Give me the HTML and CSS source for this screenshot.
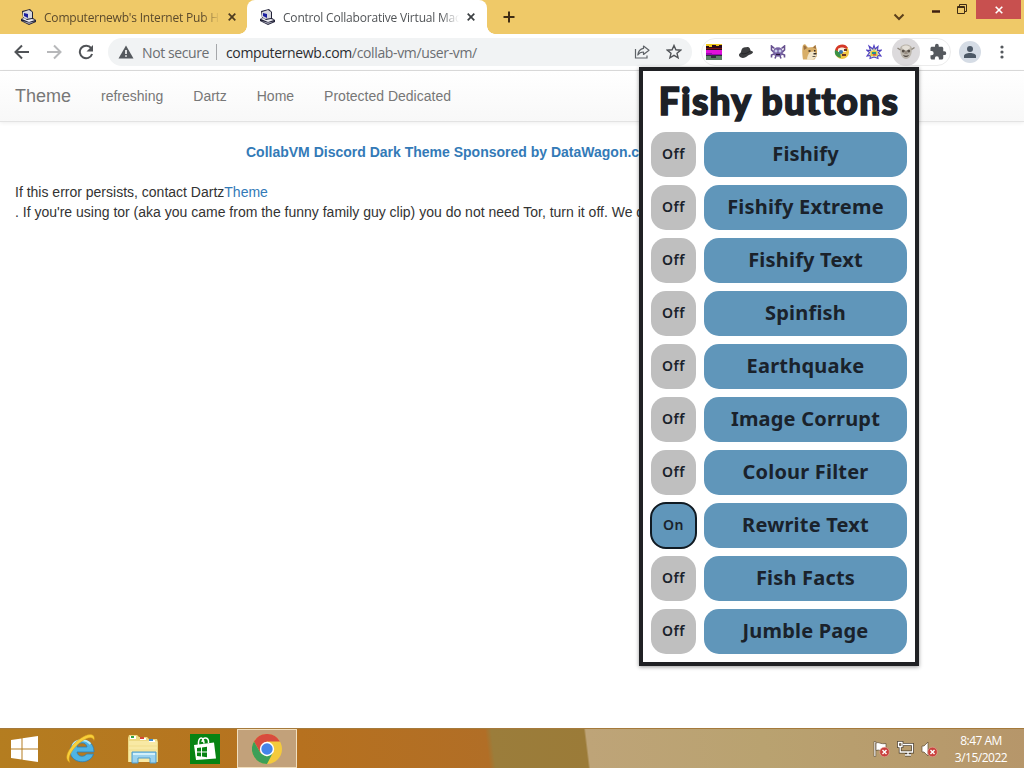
FILE: index.html
```
<!DOCTYPE html>
<html lang="en">
<head>
    <meta charset="UTF-8">
    <meta name="viewport" content="width=device-width, initial-scale=1.0">
    <title>Control Collaborative Virtual Machines</title>
    <link rel="stylesheet" href="styles.css">
</head>
<body>

    <!-- Shared icon -->
    <svg class="defs" width="0" height="0">
        <symbol id="pc" viewBox="0 0 16 16">
            <path d="M2 2l8-2 3 3v6l3 2v2l-7 3-8-4v-2l2-1z" fill="#222238"/>
            <path d="M3 3l6-2 3 2v6l-6 1-3-2z" fill="#d6d6dc"/>
            <path d="M4 4l4 1v4L4 7z" fill="#1b1fa0"/>
            <path d="M2 10l7 3 6-2-3-1-5 1-3-2z" fill="#efeff4"/>
            <path d="M2 12l7 3 6-2.5-6 1z" fill="#a7a7b8"/>
        </symbol>
    </svg>

    <div class="browser">
        <!-- Tabs -->
        <div class="tabs">
            <div class="tab">
                <svg class="favicon"><use href="#pc"/></svg>
                <span class="tab-title">Computernewb's Internet Pub H</span>
                <svg class="tab-close" viewBox="0 0 8 8"><path d="M.7.7l6.6 6.6M7.3.7L.7 7.3" stroke="#4d3b20" stroke-width="1.7"/></svg>
            </div>
            <div class="tab active">
                <svg class="favicon"><use href="#pc"/></svg>
                <span class="tab-title">Control Collaborative Virtual Mac</span>
                <svg class="tab-close" viewBox="0 0 8 8"><path d="M.7.7l6.6 6.6M7.3.7L.7 7.3" stroke="#3c4043" stroke-width="1.7"/></svg>
            </div>
            <svg class="new-tab" viewBox="0 0 12 12"><path d="M6 .5v11M.5 6h11" stroke="#3f2c14" stroke-width="2"/></svg>
            <div class="window-buttons">
                <svg class="chevron" width="12" height="8" viewBox="0 0 12 8"><path d="M1.5 1.5L6 6l4.500-4.500" fill="none" stroke="#5c401b" stroke-width="2"/></svg>
                <svg class="minimize" width="8" height="3" viewBox="0 0 8 3"><path d="M0 1.500h8" stroke="#3f1f10" stroke-width="2.500"/></svg>
                <svg class="restore" width="10" height="10" viewBox="0 0 10 10"><path d="M.5 2.500h7v7h-7zM.5 3.500h7M2.500 2V.5h7v7H8" fill="none" stroke="#3f2c14"/></svg>
                <div class="window-close">
                    <svg width="8" height="8" viewBox="0 0 8 8"><path d="M.7.7l6.600 6.600M7.300.7L.7 7.300" stroke="#fff" stroke-width="1.600"/></svg>
                </div>
            </div>
        </div>

        <!-- Toolbar -->
        <div class="toolbar">
            <div class="tool"><svg width="16" height="16" viewBox="0 0 16 16"><path d="M15 8H2M8 1.500L1.500 8 8 14.500" fill="none" stroke="#505357" stroke-width="2"/></svg></div>
            <div class="tool"><svg width="16" height="16" viewBox="0 0 16 16"><path d="M1 8h13M8 1.500L14.500 8 8 14.500" fill="none" stroke="#b7b8ba" stroke-width="2"/></svg></div>
            <div class="tool"><svg width="16" height="16" viewBox="0 0 16 16"><path d="M13.200 4.200A6.300 6.300 0 1 0 14.100 10" fill="none" stroke="#505357" stroke-width="2"/><path d="M15 1v6.500H8.500z" fill="#505357"/></svg></div>

            <div class="omnibox">
                <svg class="warning" width="16" height="14" viewBox="0 0 16 14"><path d="M8 .5l7.500 13H.5z" fill="#55595e"/><path d="M8 5v4M8 10.200v1.600" stroke="#fff" stroke-width="1.600"/></svg>
                <span class="not-secure">Not secure</span>
                <span class="divider"></span>
                <span class="url"><b>computernewb.com</b>/collab-vm/user-vm/</span>
                <div class="tool"><svg width="16" height="14" viewBox="0 0 16 14"><path d="M1.500 4v9h11.500v-2.500" fill="none" stroke="#5f6368" stroke-width="1.200"/><path d="M9.500 1L15 5.200 9.500 9.400V7C7 7 5 8 3.800 10 4.200 6.500 6 4 9.500 3.400z" fill="none" stroke="#5f6368" stroke-width="1.200" stroke-linejoin="round"/></svg></div>
                <div class="tool"><svg width="16" height="16" viewBox="0 0 16 16"><path d="M8 1.500l1.900 4.300 4.700.4-3.600 3.100 1.100 4.600L8 11.400l-4.100 2.500L5 9.300 1.400 6.200l4.700-.4z" fill="none" stroke="#505357" stroke-width="1.400"/></svg></div>
            </div>

            <div class="extensions">
                <div class="tool"><svg width="16" height="16" viewBox="0 0 16 16"><path fill="#2b0a1c" d="M0 0h16v6H0z"/><path fill="#f0c81c" d="M0 0h16v1h-3v1h-3V1H6v2H3V2H0z"/><path fill="#7a1414" d="M0 4h16v1H0z"/><path fill="#e011d8" d="M0 6h16v5H0z"/><path fill="#9a0ab0" d="M0 9h6v1h10v1H0z"/><path fill="#5b8062" d="M0 12h16v4H0z"/><path fill="#30303c" d="M0 11h16v1H0zM5 12h5v2H5z"/></svg></div>
                <div class="tool"><svg width="16" height="14" viewBox="0 0 16 14"><path d="M1 9.500C1.500 8.500 2.500 8 3 7c.5-2.500 1-4 3-4.500 1.500-.5 2 0 3-.5 2-.5 3 1 3.500 3.500C14 6 15 6.500 15 7.500c-1 1.500-3 2-5 3-2 2-5 3-7 2-1.300-.6-2.200-1.800-2-3z" fill="#3c3d3f"/><path d="M3.500 8.500c3 1 6.500-.5 8.500-2.500" stroke="#252628" fill="none"/></svg></div>
                <div class="tool"><svg width="16" height="14" viewBox="0 0 16 14"><path d="M4.500 3.500L1.500 1v4l2 2M11.500 3.500l3-2.500v4l-2 2M4 9l-2.500 1v2.500M12 9l2.500 1v2.500M6 11l-1 2.500M10 11l1 2.500" fill="none" stroke="#66508e" stroke-width="1.600"/><ellipse cx="8" cy="7" rx="5" ry="4.700" fill="#7560a2"/><circle cx="6" cy="6" r="1.500" fill="#c9cdea"/><circle cx="10" cy="6" r="1.500" fill="#c9cdea"/><path d="M6 9.500h4" stroke="#291a3b" stroke-width="1.200"/></svg></div>
                <div class="tool"><svg width="16" height="16" viewBox="0 0 16 16"><path d="M1 1l2-1 3 3.500 5-.5L13.500 1l1.500 5v6l-2.500 3.500H1C0 10 0 4 1 1z" fill="#d8ae68"/><path d="M1.500 2l1.500-.5L5 4 2 6zM11 3.500L13.500 1l.5 4z" fill="#9c7040"/><path d="M8 8l4-.5 3 2.500-1.500 4-5 2H5c0-3 1-6 3-8z" fill="#f1e4c8"/><path d="M6.500 6.200h2v1.500h-2zM12 6h1.500v1.500H12zM11.500 9h3v1.600h-3zM10.500 12h3v.8h-3z" fill="#352c24"/></svg></div>
                <div class="tool"><svg width="16" height="16" viewBox="0 0 16 16"><circle cx="8" cy="8" r="7" fill="#efc444"/><path d="M1 7a7 7 0 0 1 13-3l-5 2z" fill="#d53828"/><path d="M1 6l5 2 1 6C2 13 0 10 1 6z" fill="#3b9245"/><path d="M4 5c2-2 6-2 8 0v3H4z" fill="#f4f0e0"/><circle cx="7" cy="8" r="2" fill="#3674af"/><path d="M10 5h3v2h-3zM8 10h4v2H8z" fill="#6b3424"/></svg></div>
                <div class="tool"><svg width="16" height="16" viewBox="0 0 16 16"><path d="M8 1.500l1.200 3.500L12 2.500l-.5 4 4-.5-3 2.500L15 12l-3.500-.5.5 3-4-1.500-4 1.500.5-3L1 12l2.500-3.500L.5 6l4 .5L3 2l3.800 3z" fill="#d6e2b4" stroke="#4f3fc2" stroke-width="1.100"/><path d="M8 5l1 2 2.500.5L11 10l1 2H4l1-2-.5-2.500L7 7z" fill="#e6c93c"/><path d="M6 8h4v2H6z" fill="#238f91"/><path d="M7 10h3v1.500H7z" fill="#d94a4e"/></svg></div>
                <div class="tool selected"><svg width="18" height="18" viewBox="0 0 18 18"><path d="M3 6C3 3 6 1.500 9 1.500S15 3 15 6l-.5 4c-.5 3-3 6-5.500 6S4 13 3.500 10z" fill="#bab4aa"/><path d="M5 4c2-2 6-2 8 0l-1 3H6z" fill="#e4dfd6"/><circle cx="6.300" cy="8" r="1.500" fill="#544c44"/><circle cx="11.700" cy="8" r="1.500" fill="#544c44"/><path d="M8 8h2l.8 3H7.200z" fill="#968b80"/><path d="M6 12c2 1 4 1 6 0-1 2.500-5 2.500-6 0z" fill="#463d38"/><path d="M.5 5l3 2M14.500 6.500l3-2" stroke="#8c857b" stroke-width="1.500"/></svg></div>
                <div class="tool"><svg width="18" height="18" viewBox="0 0 24 24"><path fill="#55595e" d="M20.500 11H19V7c0-1.100-.9-2-2-2h-4V3.500a2.500 2.500 0 0 0-5 0V5H4c-1.100 0-2 .9-2 2v3.800h1.500a2.700 2.700 0 0 1 0 5.400H2V20c0 1.100.9 2 2 2h3.800v-1.500a2.700 2.700 0 0 1 5.400 0V22H17c1.100 0 2-.9 2-2v-4h1.500a2.500 2.500 0 0 0 0-5z"/></svg></div>
            </div>

            <div class="tool profile"><svg width="12" height="12" viewBox="0 0 12 12"><circle cx="6" cy="3" r="3" fill="#4d5967"/><path d="M0 12v-2c0-2 3-3 6-3s6 1 6 3v2z" fill="#4d5967"/></svg></div>
            <div class="tool"><svg width="4" height="14" viewBox="0 0 4 14"><g fill="#55595e"><circle cx="2" cy="2" r="1.600"/><circle cx="2" cy="7" r="1.600"/><circle cx="2" cy="12" r="1.600"/></g></svg></div>
        </div>

        <!-- Page -->
        <div class="page">
            <div class="navbar">
                <a class="brand">Theme</a>
                <a>refreshing</a>
                <a>Dartz</a>
                <a>Home</a>
                <a>Protected Dedicated</a>
            </div>
            <div class="sponsor">CollabVM Discord Dark Theme Sponsored by DataWagon.com</div>
            <div class="message">If this error persists, contact Dartz<a>Theme</a><br>. If you're using tor (aka you came from the funny family guy clip) you do not need Tor, turn it off. We do</div>
        </div>
    </div>

    <!-- Extension popup -->
    <div class="popup">
        <h1><span>Fishy buttons</span></h1>
        <div class="row"><button class="switch">Off</button><button class="name">Fishify</button></div>
        <div class="row"><button class="switch">Off</button><button class="name">Fishify Extreme</button></div>
        <div class="row"><button class="switch">Off</button><button class="name">Fishify Text</button></div>
        <div class="row"><button class="switch">Off</button><button class="name">Spinfish</button></div>
        <div class="row"><button class="switch">Off</button><button class="name">Earthquake</button></div>
        <div class="row"><button class="switch">Off</button><button class="name">Image Corrupt</button></div>
        <div class="row"><button class="switch">Off</button><button class="name">Colour Filter</button></div>
        <div class="row"><button class="switch on">On</button><button class="name">Rewrite Text</button></div>
        <div class="row"><button class="switch">Off</button><button class="name">Fish Facts</button></div>
        <div class="row"><button class="switch">Off</button><button class="name">Jumble Page</button></div>
    </div>

    <!-- Taskbar -->
    <div class="taskbar">
        <div class="start"><svg width="27" height="26" viewBox="0 0 27 26"><path d="M0 4l10.500-1.500v10H0zM11.500 2.300L27 0v12.500H11.500zM0 13.500h10.500v10L0 22zM11.500 13.500H27V26l-15.500-2.300z" fill="#fff"/></svg></div>
        <div class="app"><svg width="32" height="32" viewBox="0 0 32 32"><path d="M29 19H12c.5 5 7.500 5.500 9.500 2h7C25 32.500 5.500 31 5 18 5 3.500 29.500 2.500 29 19zM12 14h10c-.5-5.500-9.500-5.500-10 0z" fill="#4fb4e4" stroke="#2d7eb2" stroke-width=".8"/><path d="M7.500 13C10 6.500 20 5 25.500 11" stroke="#b4e8f8" stroke-width="2" fill="none"/><path d="M5 29.500C-2.500 26 4 14 14 6.500 22 .5 31-1 29 7.500 28 2.500 21 4.500 14.500 10 6.500 17 2 25 5 29.500z" fill="#f9d03a" stroke="#d59b16" stroke-width=".5"/></svg></div>
        <div class="app"><svg width="32" height="30" viewBox="0 0 32 30"><path d="M1 4l1-3h8l2 2h8l2 2h8l1 3v20H1z" fill="#edd983"/><path d="M2 7h28v21H2z" fill="#f8e9a4"/><path d="M3 2h6v3H3zm10 2h6v2h-6zm9 2h6v2h-6z" fill="#fff"/><path d="M4 2h3v2H4z" fill="#32a345"/><path d="M13 3h4v2h-4z" fill="#da4835"/><path d="M22 5h4v2h-4z" fill="#438bcc"/><path d="M2 12h28M2 16h28" stroke="#f0dd8c"/><path d="M5 18h24v11h-6v-5H11v5H5z" fill="#9bd2ee" stroke="#4d9bc9"/><path d="M6 20h22" stroke="#d2f0fa" stroke-width="2"/></svg></div>
        <div class="app"><svg width="30" height="30" viewBox="0 0 30 30"><path d="M0 0h30v30H0z" fill="#078313"/><path d="M8.500 11C8 2 14 2 14 9.500M12 8c1-6 7-5 6.500 1" fill="none" stroke="#fff" stroke-width="1.500"/><path d="M4 11l20-2.500 2 16L6 26z" fill="#fff"/><path d="M7 14l4-.5v4H7zm5-.6l5-.7v4.800h-5zM7 18.500h4v4l-4-.4zm5 0h5v4.800l-5-.7z" fill="#078313"/></svg></div>
        <div class="app open"><svg width="30" height="30" viewBox="0 0 30 30"><circle cx="15" cy="15" r="15" fill="#f4ca3d"/><path d="M2 7.500A15 15 0 0 1 28 7.500H15L8.500 19z" fill="#d84c3e"/><path d="M2 7.500L8.500 19l6.500 3.500L21 18.500 15 30A15 15 0 0 1 2 7.500z" fill="#3c9f58"/><circle cx="15" cy="15" r="7.200" fill="#fff"/><circle cx="15" cy="15" r="5.700" fill="#4484e8"/></svg></div>

        <div class="tray">
            <svg width="17" height="16" viewBox="0 0 17 16"><path d="M1 .5h1.800v15H1z" fill="#fff" stroke="#5b4a34" stroke-width=".6"/><path d="M3 2c3-1.500 4 1.500 10 .5v7C9 11 6 8 3 9.500z" fill="#fff" stroke="#5b4a34" stroke-width=".7"/><circle cx="11.500" cy="11" r="4.800" fill="#c9413d" stroke="#f0b4aa" stroke-width=".5"/><path d="M9.500 9l4 4M13.500 9l-4 4" stroke="#fff" stroke-width="1.400"/></svg>
            <svg width="17" height="16" viewBox="0 0 17 16"><path d="M6 3.500h9.500v7.500H6M8 14h6M11 11v3M1.500 1.500h3.500v4H1.500zM3.200 5.500v5.500h3" fill="none" stroke="#4d402f" stroke-width="2.800"/><path d="M6 3.500h9.500v7.500H6M8 14h6M11 11v3M1.500 1.500h3.500v4H1.500zM3.200 5.500v5.500h3" fill="none" stroke="#fff" stroke-width="1.300"/></svg>
            <svg width="17" height="16" viewBox="0 0 17 16"><path d="M1 5h2l4-4v14l-4-4H1z" fill="#fff" stroke="#5b4a34" stroke-width=".7"/><circle cx="11.500" cy="11" r="4.800" fill="#c9413d" stroke="#f0b4aa" stroke-width=".5"/><path d="M9.500 9l4 4M13.500 9l-4 4" stroke="#fff" stroke-width="1.400"/></svg>
        </div>
        <div class="clock">8:47 AM<br>3/15/2022</div>
    </div>

</body>
</html>
```
FILE: styles.css
```
* {
    box-sizing: border-box;
}

body {
    margin: 0;
    width: 1024px;
    height: 768px;
    overflow: hidden;
    display: flex;
    flex-direction: column;
    position: relative;
    background-color: #fff;
    font-family: "Open Sans", sans-serif;
}

svg {
    display: block;
    flex-shrink: 0;
}

.defs {
    position: absolute;
}

.browser {
    flex: 1;
    display: flex;
    flex-direction: column;
    min-height: 0;
}

/* Tabs */
.tabs {
    height: 34px;
    display: flex;
    align-items: center;
    background-color: #efc968;
}

.tab {
    width: 240px;
    height: 34px;
    padding: 0 12px;
    display: flex;
    align-items: center;
    color: #5b4a2c;
}

.tab:first-child {
    width: 247px;
    padding: 0 11px 0 20px;
}

.active {
    position: relative;
    background-color: #fff;
    border-radius: 8px 8px 0 0;
    color: #515457;
}

/* Curved feet of the active tab */
.active::before,
.active::after {
    content: "";
    position: absolute;
    bottom: 0;
    width: 8px;
    height: 8px;
}

.active::before {
    left: -8px;
    background: radial-gradient(circle at 0 0, transparent 7.5px, #fff 8px);
}

.active::after {
    right: -8px;
    background: radial-gradient(circle at 100% 0, transparent 7.5px, #fff 8px);
}

.favicon {
    width: 16px;
    height: 16px;
    margin-right: 8px;
}

.tab-title {
    flex: 1;
    min-width: 0;
    white-space: nowrap;
    font-size: 12px;
    letter-spacing: -0.2px;
    margin-right: 8px;
    -webkit-mask-image: linear-gradient(to right, #000 90%, transparent);
    mask-image: linear-gradient(to right, #000 90%, transparent);
}

.tab-close {
    width: 8px;
    height: 8px;
}

.new-tab {
    width: 12px;
    height: 12px;
    margin-left: 16px;
}

.window-buttons {
    margin-left: auto;
    margin-right: 3px;
    height: 34px;
    display: flex;
    align-items: flex-start;
}

.chevron {
    margin: 13px 27px 0 0;
}

.minimize {
    margin: 10px 17px 0 0;
}

.restore {
    margin: 4px 9px 0 0;
}

.window-close {
    width: 45px;
    height: 19px;
    display: flex;
    align-items: center;
    justify-content: center;
    background-color: #c8504f;
}

/* Toolbar */
.toolbar {
    height: 37px;
    padding-left: 6px;
    display: flex;
    align-items: center;
    border-bottom: 1px solid #dcdcdc;
}

.tool {
    width: 32px;
    height: 28px;
    flex-shrink: 0;
    display: flex;
    align-items: center;
    justify-content: center;
}

.omnibox {
    width: 584px;
    height: 28px;
    margin-left: 6px;
    padding: 0 2px 0 10px;
    display: flex;
    align-items: center;
    border-radius: 14px;
    background-color: #f1f3f4;
    font-size: 14px;
    color: #6b6e72;
    white-space: nowrap;
}

.not-secure {
    width: 74px;
    margin-left: 8px;
    letter-spacing: -0.4px;
}

.divider {
    width: 1px;
    height: 16px;
    margin-right: 9px;
    background-color: #a5a7aa;
}

.url {
    flex: 1;
    letter-spacing: -0.35px;
}

.url b {
    font-weight: normal;
    color: #2b2d30;
}

.extensions {
    width: 250px;
    height: 28px;
    margin-left: 9px;
    display: flex;
    align-items: center;
    justify-content: center;
    border: 1px solid #ececec;
    border-radius: 14px;
}

.selected {
    width: 28px;
    margin: 0 2px;
    border-radius: 50%;
    background-color: #dcdadc;
}

.profile {
    width: 22px;
    height: 22px;
    margin: 0 5px 0 8px;
    border-radius: 50%;
    background-color: #d5dce5;
}

/* Page */
.page {
    font-family: "Liberation Sans", Arial, sans-serif;
    font-size: 14px;
    line-height: 20px;
    color: #333;
    white-space: nowrap;
}

.navbar {
    height: 51px;
    margin-bottom: 20px;
    display: flex;
    align-items: center;
    background: linear-gradient(#fff, #f8f8f8);
    border-bottom: 1px solid #e3e3e3;
    box-shadow: 0 1px 4px rgba(0, 0, 0, 0.07);
    color: #777;
}

.navbar a {
    padding: 0 15px;
}

.navbar .brand {
    font-size: 18px;
}

.sponsor {
    margin-bottom: 20px;
    padding-left: 246px;
    font-weight: bold;
    color: #337ab7;
}

.message {
    padding-left: 15px;
}

.message a {
    color: #337ab7;
}

/* Popup */
.popup {
    position: absolute;
    left: 639px;
    top: 67px;
    width: 280px;
    height: 599px;
    padding: 0 8px 8px;
    display: flex;
    flex-direction: column;
    gap: 8px;
    border: 4px solid #202124;
    background-color: #fff;
    box-shadow: 0 1px 4px rgba(0, 0, 0, 0.4);
    color: #1d2127;
}

.popup h1 {
    height: 53px;
    margin: 0;
    display: flex;
    justify-content: center;
    font-family: Lato, sans-serif;
    font-size: 37px;
    font-weight: 900;
    line-height: 59px;
    letter-spacing: 1.3px;
    font-variant-ligatures: none;
    white-space: nowrap;
    -webkit-text-stroke: 1.6px #1d2127;
    stroke-linejoin: round;
}

.row {
    height: 45px;
    display: flex;
    gap: 8px;
}

.row button {
    padding: 0 0 2px;
    border: none;
    border-radius: 15px;
    font-family: "Noto Sans", sans-serif;
    font-weight: 600;
    color: #1a222b;
    white-space: nowrap;
}

.row .switch {
    width: 45px;
    font-size: 14px;
    letter-spacing: 0.6px;
    background-color: #bfbfbf;
}

.row .name {
    flex: 1;
    font-size: 20px;
    font-weight: 700;
    letter-spacing: 0.2px;
    background-color: #6096ba;
}

.row .on {
    background-color: #6096ba;
    outline: 2px solid #101a22;
    outline-offset: -1px;
}

/* Taskbar */
.taskbar {
    height: 40px;
    display: flex;
    align-items: center;
    border-top: 1px solid #a57a3c;
    background: linear-gradient(83deg, #b47d20 0, #b6711f 300px, #b16e26 486px, #9b7d3b 492px, #9b7b38 584px, #bea478 586px, #b9a270 760px, #b6966a 1024px);
}

.start {
    width: 50px;
    padding-left: 11px;
}

.app {
    width: 62px;
    display: flex;
    justify-content: center;
}

.open {
    width: 60px;
    height: 39px;
    align-items: center;
    border: 1px solid #f2dfbe;
    background-color: #c2a17a;
    margin-left: 1px;
}

.tray {
    margin-left: auto;
    display: flex;
    gap: 7px;
}

.clock {
    width: 86px;
    text-align: center;
    font-size: 12px;
    line-height: 17px;
    letter-spacing: -0.5px;
    color: #fff;
}
```
